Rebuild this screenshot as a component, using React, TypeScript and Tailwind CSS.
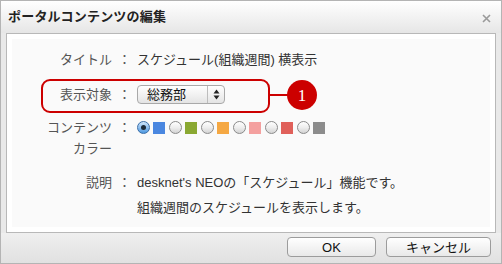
import React from "react";

const font = { fontFamily: '"Liberation Sans", "Noto Sans CJK JP", sans-serif' };

function Radio({ checked }: { checked?: boolean }) {
  if (checked) {
    return (
      <span className="w-[13px] h-[13px] rounded-full border border-[#3a6ea8] bg-gradient-to-b from-[#cfe6fb] to-[#4c98e0] flex items-center justify-center shrink-0">
        <span className="w-[5px] h-[5px] rounded-full bg-[#1c2b3a]" />
      </span>
    );
  }
  return (
    <span className="w-[13px] h-[13px] rounded-full border border-[#8a8a8a] bg-gradient-to-b from-[#ffffff] via-[#eeeeee] to-[#d4d4d4] shrink-0" />
  );
}

const colors = ["#4a87e0", "#8aa832", "#f5a843", "#f4a09f", "#e0605a", "#8c8c8c"];

export default function App() {
  return (
    <div style={font} className="relative w-[502px] h-[264px] border border-[#b4b4b4] bg-[#e9e9e9] flex flex-col overflow-hidden">
      {/* header */}
      <div className="h-[32px] shrink-0 bg-gradient-to-b from-[#ffffff] to-[#e6e6e6] flex items-center justify-between pl-[7px] pr-[10px]">
        <span className="text-[13px] font-bold text-[#222] tracking-[0.2px]">ポータルコンテンツの編集</span>
        <svg width="9" height="9" viewBox="0 0 9 9" className="mt-[3px]">
          <path d="M1 1 L8 8 M8 1 L1 8" stroke="#9a9a9a" strokeWidth="1.6" />
        </svg>
      </div>

      {/* panel */}
      <div className="px-[5px]">
        <div className="h-[200px] border border-[#b8b8b8] bg-white p-[5px]">
          <div className="h-full bg-[#fafafa] text-[13px] text-[#333]">
            {/* row 1 */}
            <div className="flex pt-[11px] leading-[20px]">
              <div className="w-[100px] text-right text-[#555]">タイトル</div>
              <div className="w-[25px] text-center text-[#555]">：</div>
              <div>スケジュール(組織週間) 横表示</div>
            </div>
            {/* row 2 */}
            <div className="flex items-center mt-[14px] h-[21px]">
              <div className="w-[100px] text-right text-[#555]">表示対象</div>
              <div className="w-[25px] text-center text-[#555]">：</div>
              <div className="w-[88px] h-[19px] rounded-[4px] border border-[#a9a9a9] bg-gradient-to-b from-[#ffffff] to-[#e4e4e4] flex items-center">
                <span className="flex-1 pl-[9px] text-[13px] text-[#111] leading-none">総務部</span>
                <span className="w-[17px] h-full border-l border-[#bdbdbd] flex items-center justify-center">
                  <svg width="7" height="11" viewBox="0 0 7 11">
                    <path d="M3.5 0.5 L6.5 4.5 L0.5 4.5 Z M3.5 10.5 L6.5 6.5 L0.5 6.5 Z" fill="#222" />
                  </svg>
                </span>
              </div>
            </div>
            {/* row 3 */}
            <div className="flex mt-[12px] leading-[21px]">
              <div className="w-[100px] text-right text-[#555]">
                <div>コンテンツ</div>
                <div>カラー</div>
              </div>
              <div className="w-[25px] text-center text-[#555]">：</div>
              <div className="flex items-center gap-[4px] h-[21px]">
                {colors.map((c, i) => (
                  <span key={c} className="flex items-center gap-[3px]">
                    <Radio checked={i === 0} />
                    <span className="w-[12px] h-[12px]" style={{ backgroundColor: c }} />
                  </span>
                ))}
              </div>
            </div>
            {/* row 4 */}
            <div className="flex mt-[11px] leading-[25px]">
              <div className="w-[100px] text-right text-[#555]">説明</div>
              <div className="w-[25px] text-center text-[#555]">：</div>
              <div>
                <div>desknet's NEOの「スケジュール」機能です。</div>
                <div>組織週間のスケジュールを表示します。</div>
              </div>
            </div>
          </div>
        </div>
      </div>

      {/* footer */}
      <div className="flex-1 bg-gradient-to-b from-[#efefef] to-[#e1e1e1] flex justify-end items-start pt-[4px] pr-[10px] gap-[10px]">
        <button className="w-[89px] h-[20px] rounded-[4px] border border-[#9c9c9c] bg-gradient-to-b from-[#ffffff] to-[#e9e9e9] text-[13px] text-[#111] leading-none flex items-center justify-center">
          OK
        </button>
        <button className="w-[105px] h-[20px] rounded-[4px] border border-[#9c9c9c] bg-gradient-to-b from-[#ffffff] to-[#e9e9e9] text-[13px] text-[#111] leading-none flex items-center justify-center">
          キャンセル
        </button>
      </div>

      {/* annotation */}
      <div className="absolute left-[40px] top-[78px] w-[229px] h-[34px] border-2 border-[#cc0000] rounded-[9px]" />
      <div className="absolute left-[269px] top-[93px] w-[18px] h-[2px] bg-[#cc0000]" />
      <div className="absolute left-[286px] top-[79px] w-[30px] h-[30px] rounded-full bg-[#cc0000] flex items-center justify-center text-white text-[17px] leading-none" style={{ fontFamily: '"Liberation Serif", serif' }}>
        1
      </div>
    </div>
  );
}
